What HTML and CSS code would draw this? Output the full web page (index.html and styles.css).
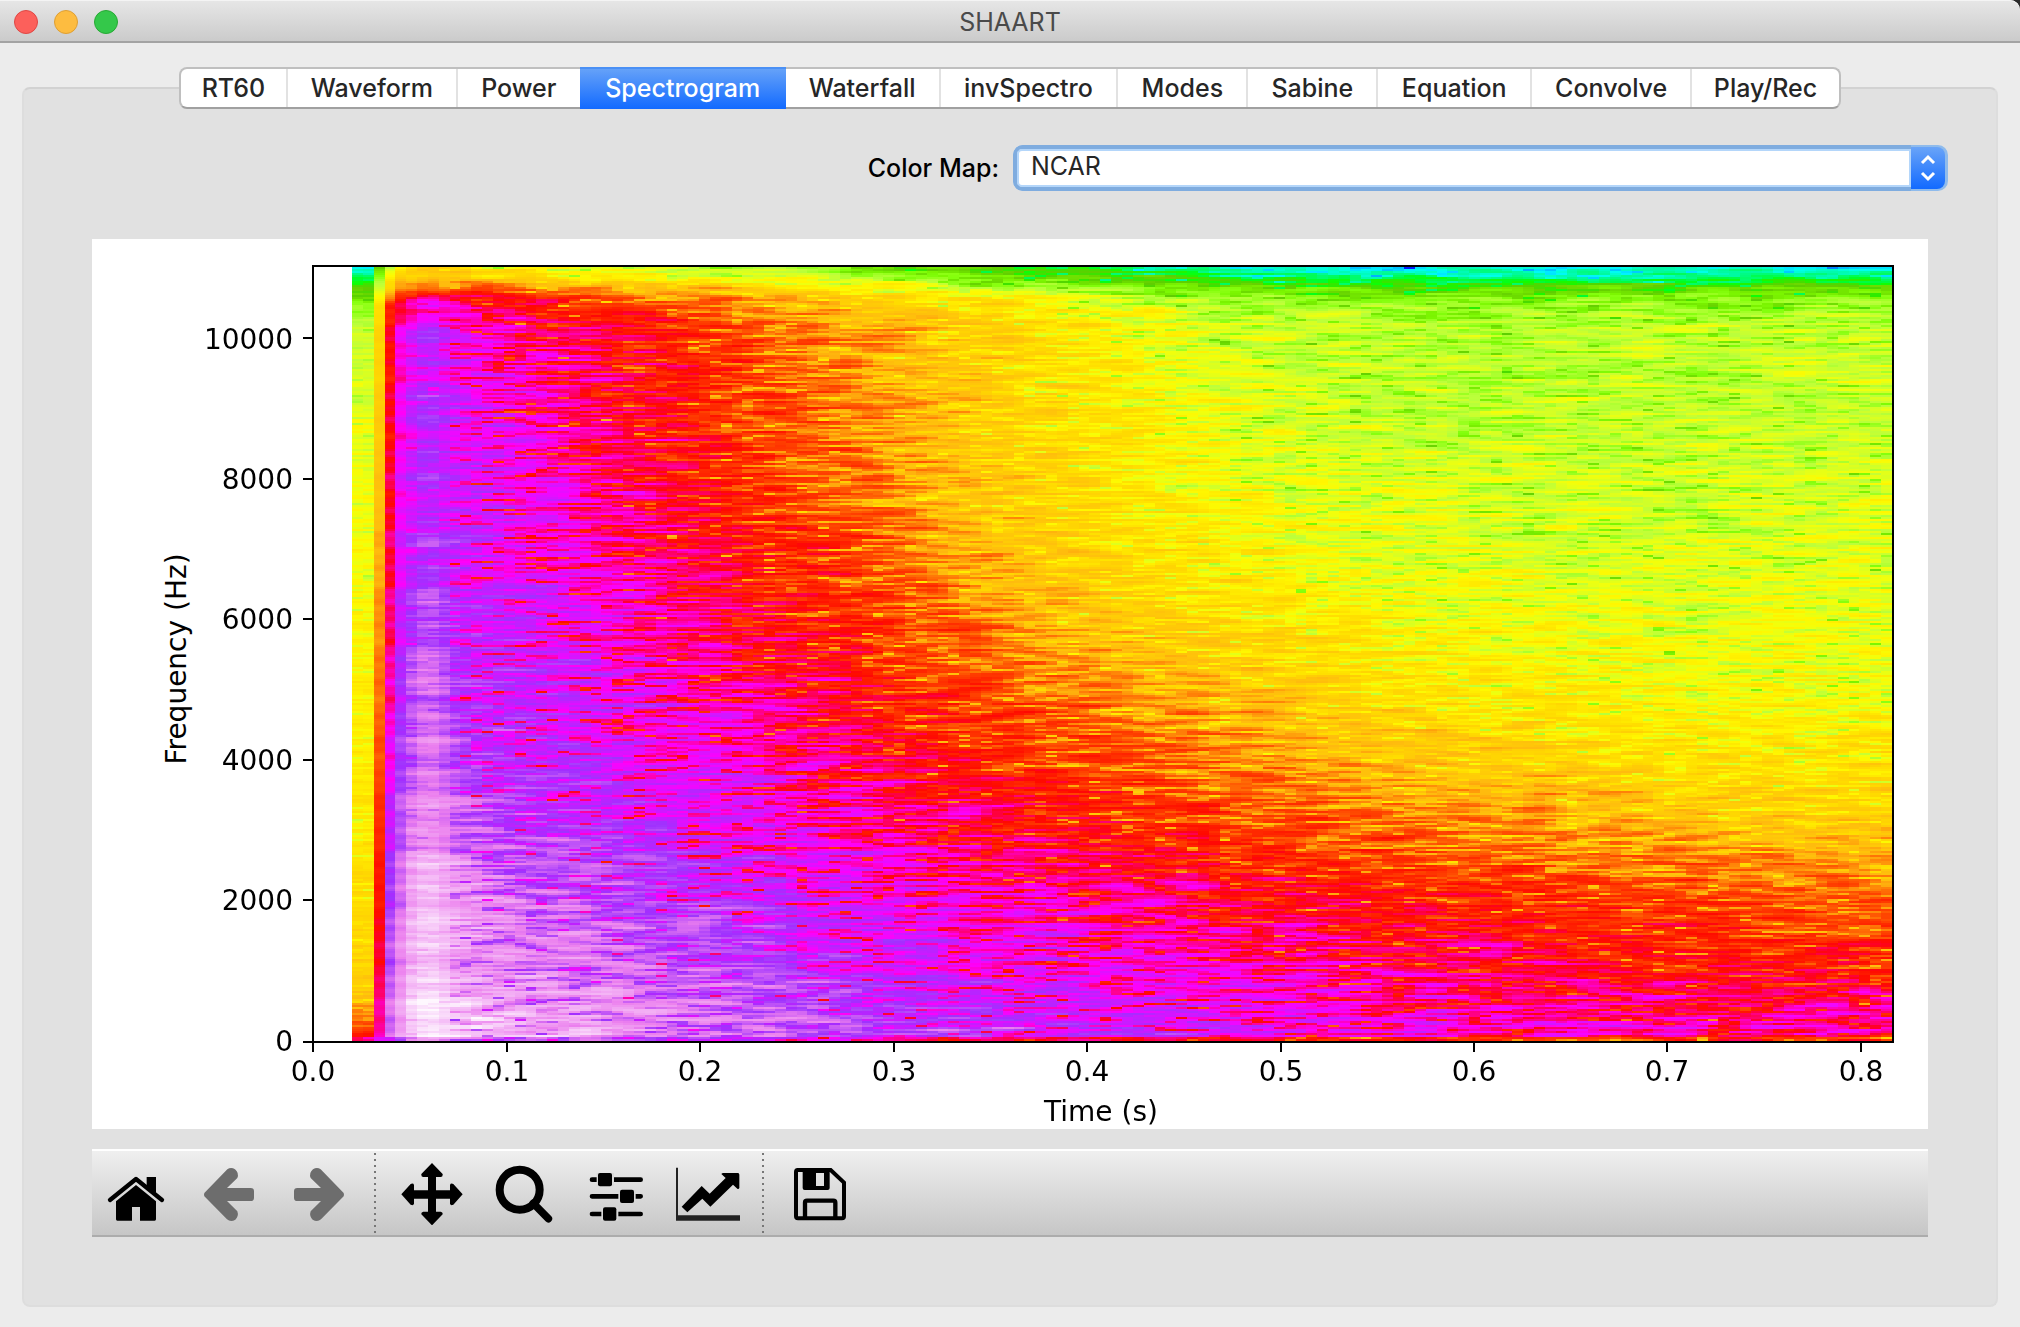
FILE: index.html
```html
<!DOCTYPE html>
<html lang="en">
<head>
<meta charset="utf-8">
<title>SHAART</title>
<link rel="stylesheet" href="styles.css">
</head>
<body>
<div class="window">
  <header class="titlebar">
    <div class="lights">
      <button class="light light-close" aria-label="Close"></button>
      <button class="light light-minimize" aria-label="Minimize"></button>
      <button class="light light-zoom" aria-label="Zoom"></button>
    </div>
    <h1 class="title">SHAART</h1>
  </header>

  <main class="content">
    <section class="panel">
      <nav class="tabs" role="tablist">
        <button class="tab" role="tab">RT60</button>
        <button class="tab" role="tab">Waveform</button>
        <button class="tab" role="tab">Power</button>
        <button class="tab tab-active" role="tab" aria-selected="true">Spectrogram</button>
        <button class="tab" role="tab">Waterfall</button>
        <button class="tab" role="tab">invSpectro</button>
        <button class="tab" role="tab">Modes</button>
        <button class="tab" role="tab">Sabine</button>
        <button class="tab" role="tab">Equation</button>
        <button class="tab" role="tab">Convolve</button>
        <button class="tab" role="tab">Play/Rec</button>
      </nav>

      <div class="form-row">
        <label class="form-label" for="colormap">Color Map:</label>
        <div class="combo">
          <select class="combo-select" id="colormap"><option>NCAR</option></select>
          <span class="combo-arrows" aria-hidden="true">
            <svg width="16" height="30" viewBox="0 0 16 30"><path d="M2 10L8 4L14 10M2 20L8 26L14 20" fill="none" stroke="#fff" stroke-width="3"/></svg>
          </span>
        </div>
      </div>

      <div class="figure">
        <svg class="chart" viewBox="0 0 1836 890">
          <foreignObject x="260" y="28" width="1540" height="774"><canvas class="spectrogram" id="spectrogram" width="142" height="387"></canvas></foreignObject>
          <rect x="221" y="27" width="1580" height="776" fill="none" stroke="#000" stroke-width="2"/>
          <path d="M211 803h10M211 661h10M211 521h10M211 380h10M211 240h10M211 99h10M221 803v10M415 803v10M608 803v10M802 803v10M995 803v10M1189 803v10M1382 803v10M1575 803v10M1769 803v10" stroke="#000" stroke-width="2"/>
          <g class="axis-text" text-anchor="end">
            <text x="201" y="812">0</text>
            <text x="201" y="671">2000</text>
            <text x="201" y="531">4000</text>
            <text x="201" y="390">6000</text>
            <text x="201" y="250">8000</text>
            <text x="201" y="110">10000</text>
          </g>
          <g class="axis-text" text-anchor="middle">
            <text x="221" y="842">0.0</text>
            <text x="415" y="842">0.1</text>
            <text x="608" y="842">0.2</text>
            <text x="802" y="842">0.3</text>
            <text x="995" y="842">0.4</text>
            <text x="1189" y="842">0.5</text>
            <text x="1382" y="842">0.6</text>
            <text x="1575" y="842">0.7</text>
            <text x="1769" y="842">0.8</text>
            <text x="1009" y="882">Time (s)</text>
            <text x="94" y="420" transform="rotate(-90 94 420)">Frequency (Hz)</text>
          </g>
        </svg>
      </div>

      <div class="toolbar" role="toolbar">
        <button class="tool tool-first" aria-label="Home"><svg class="icon" viewBox="75 93 192 192"><path d="M90 210L168 147L246 210" fill="none" stroke="#000" stroke-width="13" stroke-linejoin="round" stroke-linecap="round"/><path d="M200 141h28v48l-28-22zM108 214L168 165L228 214V268q0 4-4 4H180V231H156V272H112q-4 0-4-4z"/></svg></button>
        <button class="tool" aria-label="Back" disabled><svg class="icon" viewBox="348 93 192 192"><path d="M373 189L442 118Q453 110 465 118Q478 129 472 144L441 174H512Q522 174 522 184V203Q522 213 512 213H441L472 244Q477 258 466 269Q452 277 441 268L373 199Q371 194 373 189z" fill="#6d6d6d"/></svg></button>
        <button class="tool" aria-label="Forward" disabled><svg class="icon" viewBox="624 93 192 192"><path d="M791 189L722 118Q711 110 699 118Q686 129 692 144L723 174H652Q642 174 642 184V203Q642 213 652 213H723L692 244Q687 258 698 269Q712 277 723 268L791 199Q793 194 791 189z" fill="#6d6d6d"/></svg></button>
        <span class="separator"></span>
        <button class="tool" aria-label="Pan"><svg class="icon" viewBox="960 93 192 192"><path d="M1056 99L1088 132Q1089 140 1082 141H1068V181H1110V165Q1112 158 1120 162L1148 193L1120 224Q1112 228 1110 221V206H1068V245H1082Q1089 246 1088 253L1056 286L1024 253Q1023 246 1030 245H1044V206H1002V221Q1000 228 992 224L964 193L992 162Q1000 158 1002 165V181H1044V141H1030Q1023 140 1024 132z"/></svg></button>
        <button class="tool" aria-label="Zoom to rectangle"><svg class="icon" viewBox="36 93 192 192"><circle cx="119" cy="179" r="60" fill="none" stroke="#000" stroke-width="24"/><path d="M160 220L205 266" stroke="#000" stroke-width="23" stroke-linecap="round"/></svg></button>
        <button class="tool" aria-label="Configure subplots"><svg class="icon" viewBox="312 93 192 192"><path d="M336 149H482M336 199H482M336 252H482" stroke="#000" stroke-width="14" stroke-linecap="round"/><path d="M350 129h52v40h-52zM415 180h52v40h-52zM364 232h51v40h-51z" fill="#d8d8d8"/><rect x="354" y="129" width="42" height="40" rx="6"/><rect x="420" y="179" width="42" height="40" rx="6"/><rect x="369" y="232" width="40" height="40" rx="6"/></svg></button>
        <button class="tool" aria-label="Edit axes"><svg class="icon" viewBox="588 93 192 192"><path d="M591 113V264" stroke="#222" stroke-width="6"/><path d="M588 264H780" stroke="#222" stroke-width="17"/><path d="M605 230L665 168L689 191L737 144L724 132Q726 129 730 129H774Q778 129 778 134V174Q776 178 772 176L759 164L691 230L667 206L622 247z"/></svg></button>
        <span class="separator"></span>
        <button class="tool" aria-label="Save"><svg class="icon" viewBox="924 93 192 192"><path d="M953 120H1052L1092 158V259Q1092 265 1086 265H954Q948 265 948 259V126Q948 120 953 120z" fill="none" stroke="#000" stroke-width="12"/><path d="M968 118H1049V174Q1049 180 1043 180H974Q968 180 968 174zM1008 129V168H1032V129z" fill-rule="evenodd"/><path d="M975 262V218Q975 212 981 212H1060Q1066 212 1066 218V262" fill="none" stroke="#000" stroke-width="13"/></svg></button>
      </div>
    </section>
  </main>
</div>
<script src="spectrogram.js"></script>
</body>
</html>
```
FILE: styles.css
```css
* { box-sizing: border-box; }

html { background: #2a2a2a; }

body {
  margin: 0;
  font-family: Inter, "Liberation Sans", sans-serif;
  font-size: 25px;
  line-height: 30px;
  color: #262626;
}

button, select { font: inherit; color: inherit; }

.window {
  display: flex;
  flex-direction: column;
  min-height: 100vh;
  background: #ececec;
  border-top-right-radius: 10px;
}

.titlebar {
  display: grid;
  grid-template-columns: 1fr auto 1fr;
  align-items: center;
  height: 43px;
  padding: 1px 14px 0;
  background: linear-gradient(#e6e6e6, #cbcbcb);
  border-top: 1px solid #f4f4f4;
  border-bottom: 2px solid #a3a3a3;
  border-top-right-radius: 10px;
}

.lights { display: flex; gap: 16px; }

.light {
  width: 24px;
  height: 24px;
  padding: 0;
  border: 1px solid;
  border-radius: 50%;
}

.light-close { background: #fc605b; border-color: #df4744; }
.light-minimize { background: #fdbc40; border-color: #de9f34; }
.light-zoom { background: #34c84a; border-color: #27a934; }

.title {
  margin: 0;
  font-size: 25px;
  font-weight: 400;
  color: #4a4a4a;
}

.content {
  display: flex;
  flex: 1;
  padding: 44px 22px 20px;
}

.panel {
  flex: 1;
  min-width: 0;
  background: #e1e1e1;
  border: 2px solid #dddddd;
  border-top-color: #d2d2d2;
  border-radius: 8px;
}

.tabs {
  display: grid;
  grid-template-columns: 105fr 170fr 124fr 206fr 153fr 178fr 130fr 130fr 154fr 160fr 149fr;
  max-width: 1662px;
  height: 42px;
  margin: -22px auto 0;
  background: #fff;
  border: 2px solid #bfbfbf;
  border-bottom-color: #a0a0a0;
  border-radius: 8px;
}

.tab {
  padding: 0;
  border: 0;
  border-left: 2px solid #e2e2e2;
  background: none;
  font-weight: 500;
}

.tab:first-child { border-left: 0; }

.tab-active {
  margin: -2px 0;
  border-left: 0;
  background: linear-gradient(#69a4f8, #126aff);
  box-shadow: inset 0 2px #4a90f5;
  color: #fff;
}

.tab-active + .tab { border-left: 0; }

.form-row {
  display: grid;
  grid-template-columns: 975fr 935fr;
  gap: 14px;
  align-items: center;
  margin: 36px 48px 0 0;
}

.form-label {
  text-align: right;
  font-weight: 500;
  color: #000;
}

.combo {
  display: flex;
  height: 46px;
  border-radius: 10px;
  background: #8fbbec;
  overflow: hidden;
}

.combo-select {
  flex: 1;
  min-width: 0;
  padding: 0 14px 4px;
  appearance: none;
  background: #fff;
  border: 4px solid #7facdf;
  border-right: 0;
  border-radius: 9px 0 0 9px;
  box-shadow: inset 0 0 0 2px #b4d6fa;
  outline: 0;
}

.combo-arrows {
  display: flex;
  align-items: center;
  justify-content: center;
  width: 34px;
  margin: 2px 3px 2px 0;
  border-radius: 0 8px 8px 0;
  background: linear-gradient(#69a4f8, #126aff);
}

.figure {
  margin: 48px 68px 0;
  background: #fff;
}

.chart { display: block; width: 100%; }

.axis-text {
  font-family: "DejaVu Sans", sans-serif;
  font-size: 28px;
  fill: #000;
}

.spectrogram {
  display: block;
  width: 100%;
  height: 100%;
  image-rendering: pixelated;
}

.toolbar {
  display: flex;
  align-items: stretch;
  height: 88px;
  margin: 20px 68px 0;
  background: linear-gradient(#efefef, #c6c6c6);
  border-top: 2px solid #fff;
  border-bottom: 2px solid #acacac;
}

.tool {
  display: flex;
  align-items: center;
  justify-content: center;
  width: 92px;
  padding: 0;
  border: 0;
  background: none;
}

.tool-first { width: 90px; }

.icon { width: 64px; height: 64px; }

.separator {
  width: 2px;
  margin: 2px 10px 2px 8px;
  background: repeating-linear-gradient(#777 0 2px, transparent 2px 6px);
}
```
FILE: spectrogram.js
```js
// NCAR colour map: [position, level] stops for each channel.
const RED = [[0, 0], [.3098, 0], [.3725, .3993], [.4235, .5003], [.5333, 1], [.7922, 1], [.8471, .6218], [.898, .9235], [1, .9961]];
const GREEN = [[0, 0], [.051, .3722], [.1059, 0], [.1569, .7202], [.1647, .7752], [.2157, 1], [.2588, .9804], [.3176, 1], [.3686, .8081], [.4275, 1], [.5216, 1], [.6314, .7292], [.6863, .2796], [.7451, 0], [.7922, 0], [.8431, .1753], [.898, .5], [1, .9725]];
const BLUE = [[0, .502], [.051, .0222], [.1098, 1], [.2039, 1], [.2627, .6145], [.3216, 0], [.4157, 0], [.4745, .2342], [.5333, 0], [.5804, 0], [.6314, .0549], [.6902, 0], [.7373, 0], [.7922, .9738], [.8, 1], [.8431, 1], [.898, .9341], [1, .9961]];

// Mean level of the decay; one line per frequency row, one value per time column.
const COLS = [4, 12, 21, 30, 39, 48, 57, 66, 80, 94, 108, 122, 141];
const LEVELS = [
  [0, [.58, .55, .52, .48, .44, .40, .36, .31, .25, .22, .20, .21, .22]],
  [5, [.60, .58, .55, .53, .50, .47, .43, .38, .32, .29, .28, .29, .30]],
  [10, [.68, .70, .65, .61, .57, .54, .51, .45, .40, .38, .37, .38, .38]],
  [16, [.78, .755, .70, .665, .625, .585, .565, .53, .465, .44, .43, .435, .445]],
  [30, [.82, .775, .745, .71, .665, .63, .59, .555, .49, .47, .465, .47, .48]],
  [75, [.83, .79, .755, .72, .68, .64, .60, .565, .505, .48, .475, .48, .485]],
  [120, [.83, .805, .77, .735, .70, .655, .61, .575, .53, .50, .49, .49, .495]],
  [160, [.85, .81, .785, .755, .72, .685, .64, .595, .56, .52, .505, .505, .505]],
  [208, [.885, .82, .80, .775, .745, .715, .68, .645, .605, .57, .54, .525, .525]],
  [245, [.88, .84, .81, .79, .77, .74, .715, .69, .65, .62, .585, .56, .55]],
  [280, [.91, .86, .83, .81, .79, .765, .745, .73, .695, .67, .645, .62, .60]],
  [315, [.945, .90, .86, .835, .81, .79, .775, .765, .745, .72, .705, .69, .66]],
  [345, [.955, .91, .88, .855, .83, .81, .795, .785, .77, .75, .735, .72, .715]],
  [370, [.975, .93, .91, .885, .86, .84, .82, .805, .79, .775, .765, .755, .75]],
  [386, [.985, .94, .925, .90, .88, .855, .84, .82, .80, .79, .78, .775, .77]]
];

// Columns before and across the direct sound.
const LEAD = [[0, .23], [8, .34], [16, .42], [30, .48], [70, .51], [150, .53], [240, .55], [320, .57], [360, .59], [378, .67], [386, .76]];
const ONSET = {
  2: [[0, .37], [10, .50], [20, .58], [110, .62], [170, .65], [240, .68], [290, .72], [340, .745], [386, .78]],
  3: [[0, .47], [10, .60], [20, .73], [150, .755], [200, .77], [250, .80], [310, .85], [386, .89]],
  4: [[0, .53], [10, .66], [16, .74], [30, .785], [150, .81], [220, .84], [300, .88], [386, .93]]
};
const PEAK_OFFSET = { 5: -.012, 6: .006, 7: .008, 8: -.006, 9: .006, 10: .004 };

function lerp(stops, x) {
  if (x <= stops[0][0]) return stops[0][1];
  for (let i = 1; i < stops.length; i++) {
    if (x <= stops[i][0]) {
      const [x0, y0] = stops[i - 1];
      const [x1, y1] = stops[i];
      return y0 + (y1 - y0) * (x - x0) / (x1 - x0);
    }
  }
  return stops[stops.length - 1][1];
}

let seed = 20117;
function random() {
  seed = (seed * 1664525 + 1013904223) % 4294967296;
  return (seed + 1) / 4294967297;
}
function gauss() {
  return Math.sqrt(-2 * Math.log(random())) * Math.cos(2 * Math.PI * random());
}

const canvas = document.getElementById("spectrogram");
const ctx = canvas.getContext("2d");
const W = canvas.width;
const H = canvas.height;
const image = ctx.createImageData(W, H);

// Complex noise, smoothed along time and slightly along frequency.
function field() {
  const raw = Array.from({ length: H + 2 }, () => Array.from({ length: W + 6 }, gauss));
  const kernel = [.3, .7, 1, 1, .7, .3];
  const across = raw.map(row => Array.from({ length: W }, (_, c) => kernel.reduce((sum, k, i) => sum + k * row[c + i], 0) / 1.778));
  return Array.from({ length: H }, (_, r) => across[r].map((v, c) => (v + .7 * across[r + 1][c]) / 1.22));
}
const re = field();
const im = field();

for (let r = 0; r < H; r++) {
  const stops = COLS.map((c, i) => [c, lerp(LEVELS.map(([row, values]) => [row, values[i]]), r)]);
  const band = .01 * Math.sin(r * .43) + .009 * Math.sin(r * .19 + 1) + .008 * Math.sin(r * 1.1);
  for (let c = 0; c < W; c++) {
    const power = (re[r][c] ** 2 + im[r][c] ** 2) / 2;
    const noise = .024 * (Math.log(power + .004) + .4);
    let v;
    if (c < 2) {
      v = lerp(LEAD, r) + noise * .6;
    } else if (c < 5) {
      v = lerp(ONSET[c], r) + band * (c === 2 ? .5 : 1);
    } else if (c < 11) {
      v = lerp(stops, c < 9 ? 4 : c) + PEAK_OFFSET[c] + band + noise * (c < 9 ? .4 : .75);
    } else {
      v = lerp(stops, c) + noise + (r > 20 ? .005 : 0);
    }
    if (r > H - 3) v -= c < 3 ? -.03 : .07;
    v = Math.min(1, Math.max(0, v));
    const o = (r * W + c) * 4;
    image.data[o] = 255 * lerp(RED, v);
    image.data[o + 1] = 255 * lerp(GREEN, v);
    image.data[o + 2] = 255 * lerp(BLUE, v);
    image.data[o + 3] = 255;
  }
}
ctx.putImageData(image, 0, 0);
```
